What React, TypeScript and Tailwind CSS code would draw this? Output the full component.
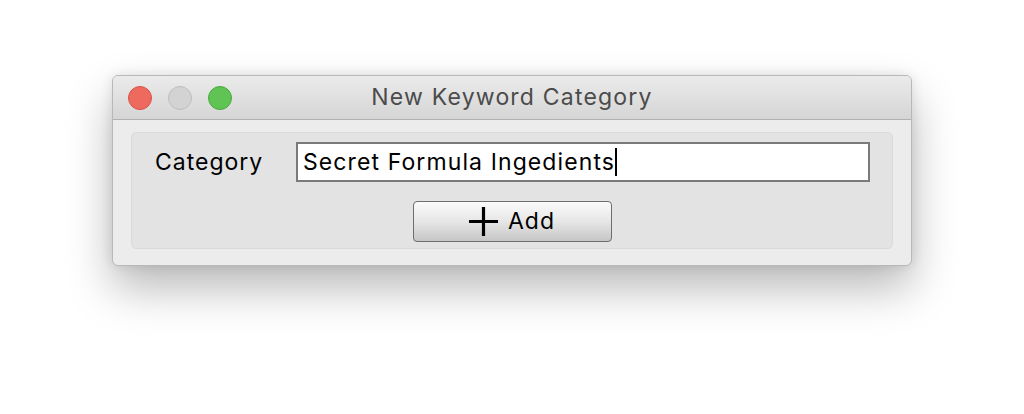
import React from 'react';

const font = { fontFamily: 'Inter, "Noto Sans", sans-serif' };

const TrafficLight: React.FC<{ color: string }> = ({ color }) => (
  <div className={`w-[24px] h-[24px] rounded-full border ${color}`} />
);

const App: React.FC = () => {
  return (
    <div className="w-[1024px] h-[414px] bg-white pt-[75px] pl-[112px]" style={font}>
      <div className="w-[800px] h-[191px] rounded-[6px] border border-[#b8b8b8] bg-[#ececec] shadow-[0_22px_45px_rgba(0,0,0,0.28),0_0_12px_rgba(0,0,0,0.10)] flex flex-col overflow-hidden">
        <div className="relative h-[44px] shrink-0 flex items-center px-[15px] gap-[16px] bg-gradient-to-b from-[#ebebeb] to-[#d5d5d5] border-b border-[#b1b1b1]">
          <TrafficLight color="bg-[#ee6a5e] border-[#d5534a]" />
          <TrafficLight color="bg-[#d3d3d3] border-[#bdbdbd]" />
          <TrafficLight color="bg-[#5fc454] border-[#4ba93f]" />
          <div className="absolute inset-0 flex items-center justify-center text-[23px] tracking-[1.2px] text-[#4b4b4b] pointer-events-none">
            New Keyword Category
          </div>
        </div>
        <div className="flex-1 pt-[12px] px-[18px] pb-[16px]">
          <div className="h-[117px] rounded-[5px] border border-[#dadada] bg-[#e3e3e3] flex flex-col items-center pt-[9px]">
            <div className="w-full flex items-center pl-[23px] pr-[22px]">
              <span className="w-[141px] text-[23px] tracking-[1px] text-black">Category</span>
              <div className="flex-1 h-[40px] bg-white border-2 border-[#7a7a7a] flex items-center pl-[5px] text-[23px] tracking-[1.1px] text-black">
                <span>Secret Formula Ingedients</span>
                <span className="w-[2px] h-[28px] bg-black" />
              </div>
            </div>
            <button className="mt-[19px] w-[199px] h-[41px] rounded-[4px] border border-[#6e6e6e] bg-gradient-to-b from-[#fbfbfb] via-[#e6e6e6] to-[#c6c6c6] flex items-center justify-center gap-[10px] text-[23px] tracking-[1px] text-black">
              <svg width="29" height="29" viewBox="0 0 29 29">
                <path d="M14.5 0v29M0 14.5h29" stroke="black" strokeWidth="3.2" />
              </svg>
              <span>Add</span>
            </button>
          </div>
        </div>
      </div>
    </div>
  );
};

export default App;
